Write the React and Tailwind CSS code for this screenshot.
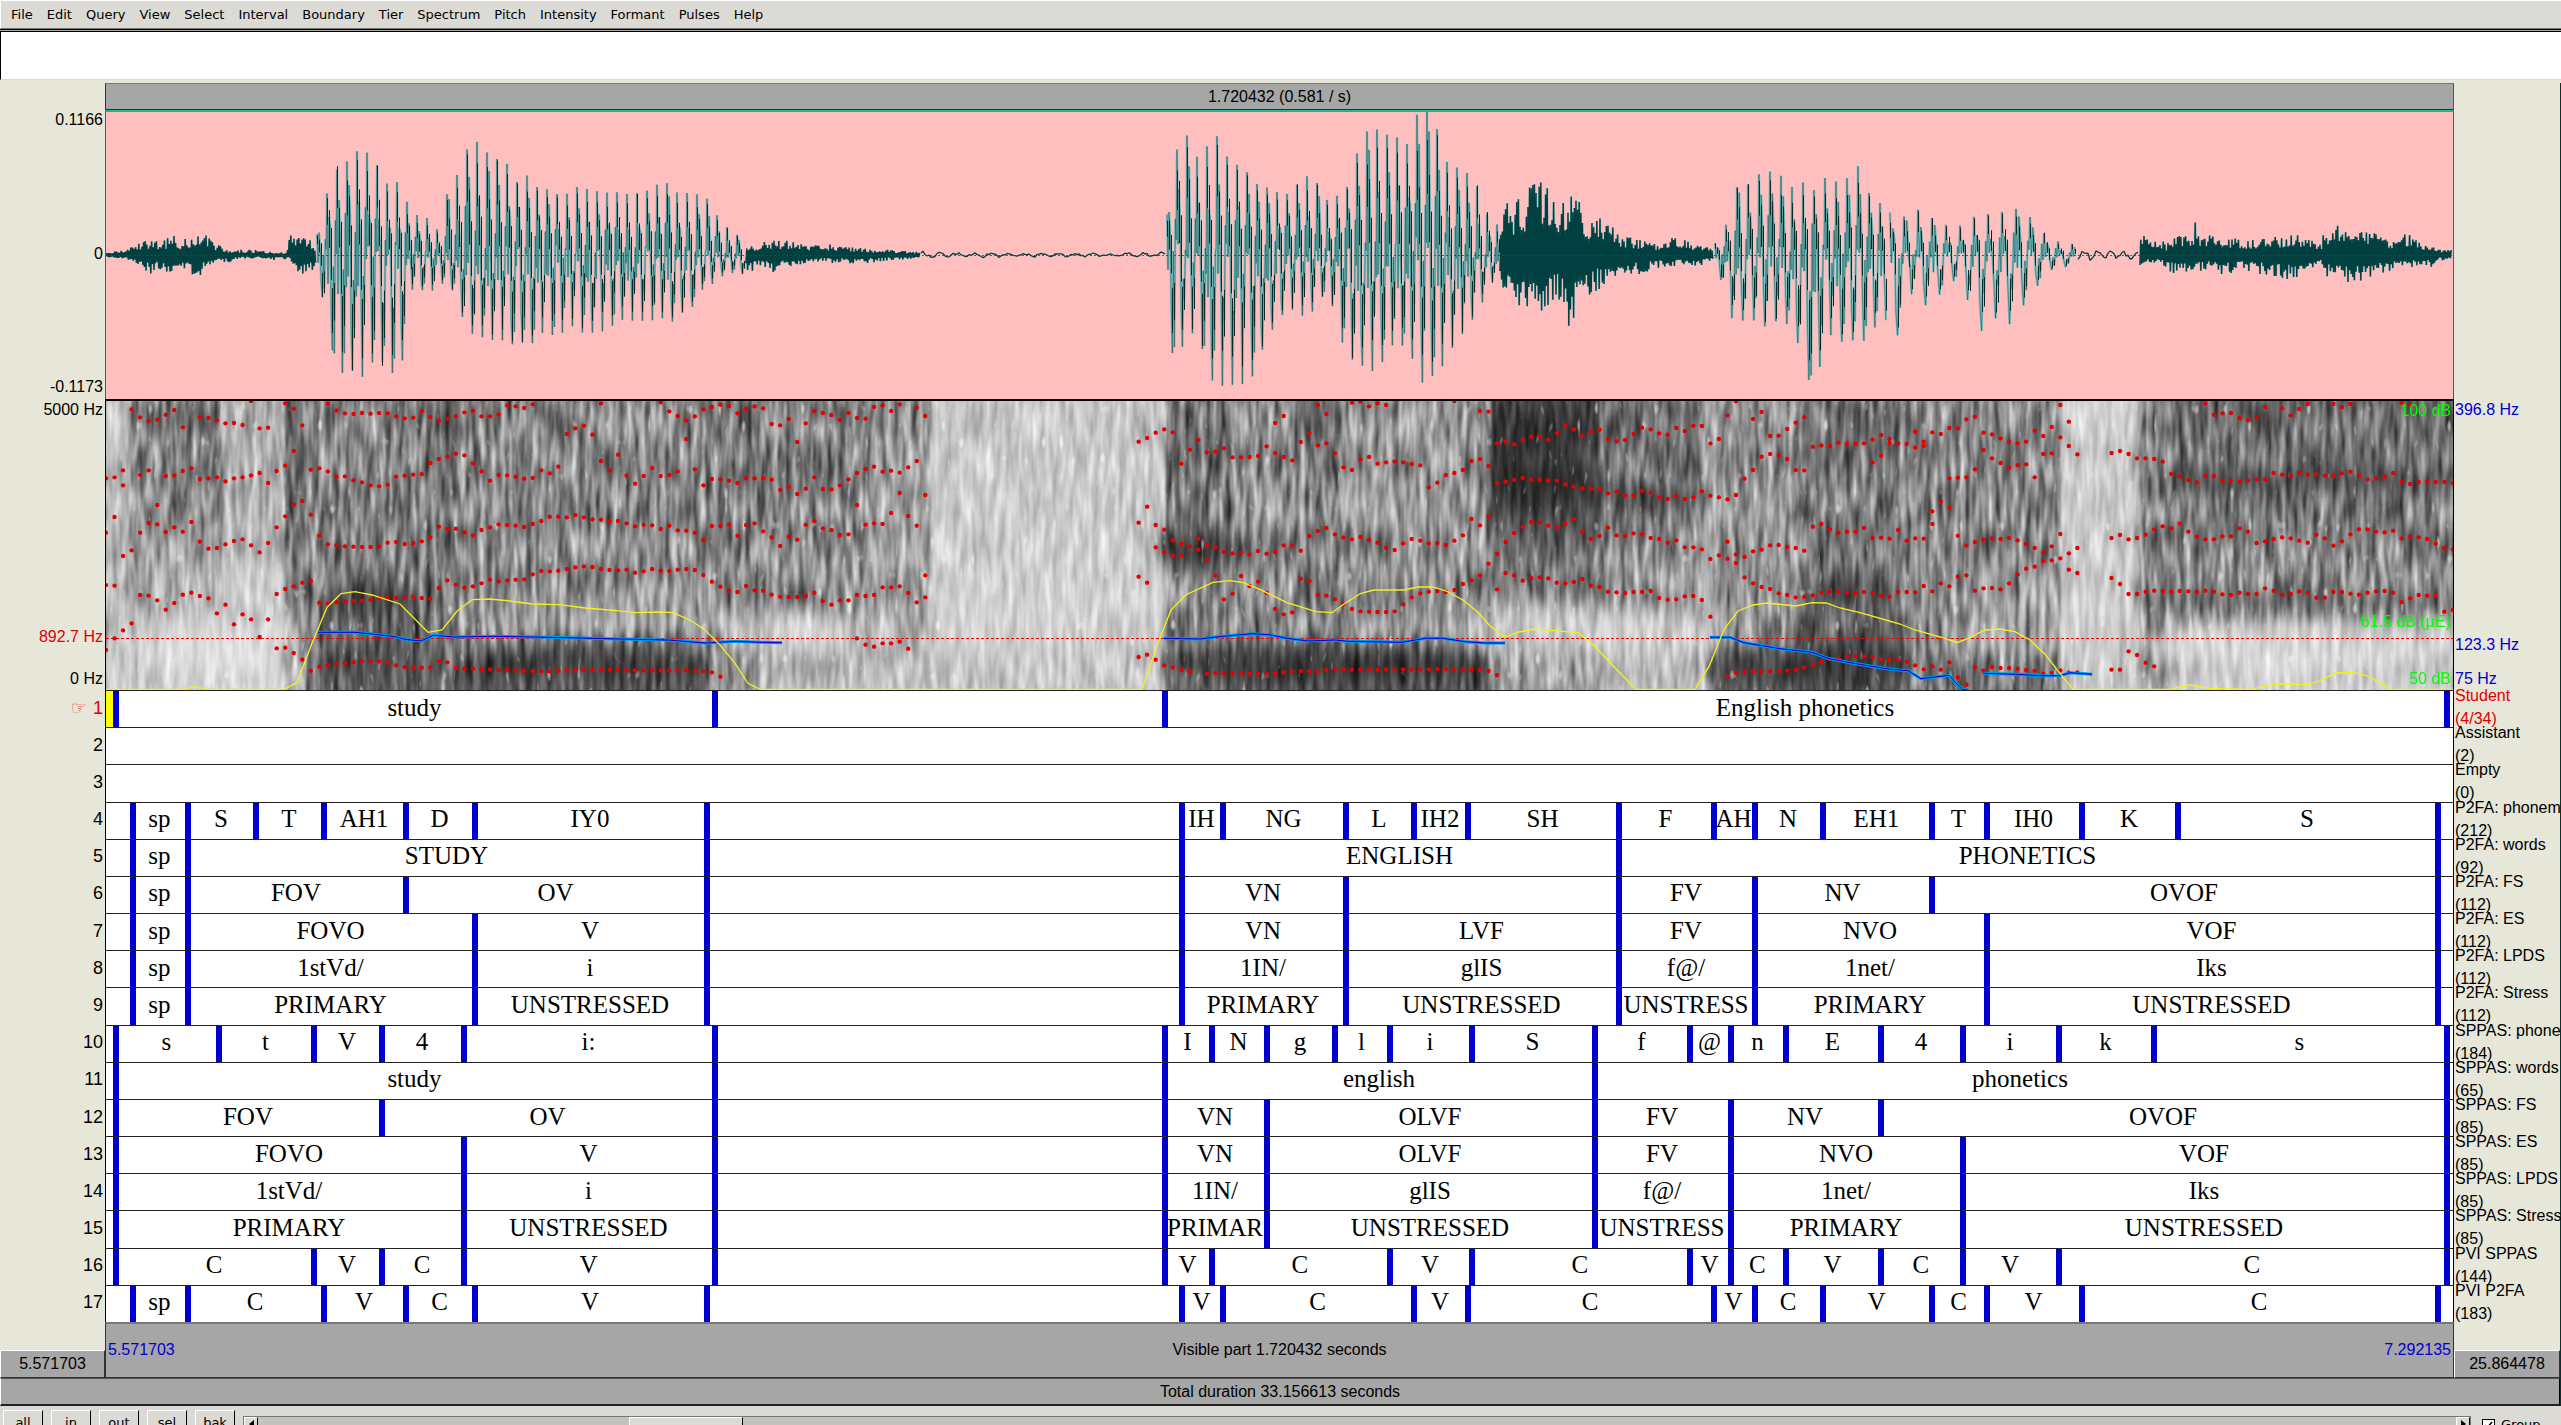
import React, { useMemo } from "react";

const MENUS = [
  "File", "Edit", "Query", "View", "Select", "Interval", "Boundary", "Tier",
  "Spectrum", "Pitch", "Intensity", "Formant", "Pulses", "Help",
];

// plot units: the visible part runs from LEFT to LEFT + SPAN
const LEFT = 106;
const SPAN = 2347;

// every entry is [end of interval, label]
const TIERS = [
  { name: "Student", count: "(4/34)", cells: [[116, ""], [715, "study"], [1165, ""], [2447, "English phonetics"]] },
  { name: "Assistant", count: "(2)", cells: [] },
  { name: "Empty", count: "(0)", cells: [] },
  {
    name: "P2FA: phonem", count: "(212)",
    cells: [
      [133, ""], [188, "sp"], [256, "S"], [324, "T"], [406, "AH1"], [475, "D"], [707, "IY0"], [1182, ""],
      [1223, "IH"], [1346, "NG"], [1414, "L"], [1468, "IH2"], [1619, "SH"], [1714, "F"], [1755, "AH"],
      [1823, "N"], [1932, "EH1"], [1987, "T"], [2082, "IH0"], [2178, "K"], [2438, "S"],
    ],
  },
  { name: "P2FA: words", count: "(92)", cells: [[133, ""], [188, "sp"], [707, "STUDY"], [1182, ""], [1619, "ENGLISH"], [2438, "PHONETICS"]] },
  {
    name: "P2FA: FS", count: "(112)",
    cells: [[133, ""], [188, "sp"], [406, "FOV"], [707, "OV"], [1182, ""], [1346, "VN"], [1619, ""], [1755, "FV"], [1932, "NV"], [2438, "OVOF"]],
  },
  {
    name: "P2FA: ES", count: "(112)",
    cells: [[133, ""], [188, "sp"], [475, "FOVO"], [707, "V"], [1182, ""], [1346, "VN"], [1619, "LVF"], [1755, "FV"], [1987, "NVO"], [2438, "VOF"]],
  },
  {
    name: "P2FA: LPDS", count: "(112)",
    cells: [[133, ""], [188, "sp"], [475, "1stVd/"], [707, "i"], [1182, ""], [1346, "1IN/"], [1619, "glIS"], [1755, "f@/"], [1987, "1net/"], [2438, "Iks"]],
  },
  {
    name: "P2FA: Stress", count: "(112)",
    cells: [
      [133, ""], [188, "sp"], [475, "PRIMARY"], [707, "UNSTRESSED"], [1182, ""], [1346, "PRIMARY"],
      [1619, "UNSTRESSED"], [1755, "UNSTRESS"], [1987, "PRIMARY"], [2438, "UNSTRESSED"],
    ],
  },
  {
    name: "SPPAS: phone", count: "(184)",
    cells: [
      [116, ""], [219, "s"], [314, "t"], [382, "V"], [464, "4"], [715, "i:"], [1165, ""], [1212, "I"], [1267, "N"],
      [1335, "g"], [1390, "l"], [1472, "i"], [1595, "S"], [1690, "f"], [1731, "@"], [1786, "n"], [1881, "E"],
      [1963, "4"], [2059, "i"], [2154, "k"], [2447, "s"],
    ],
  },
  { name: "SPPAS: words", count: "(65)", cells: [[116, ""], [715, "study"], [1165, ""], [1595, "english"], [2447, "phonetics"]] },
  {
    name: "SPPAS: FS", count: "(85)",
    cells: [[116, ""], [382, "FOV"], [715, "OV"], [1165, ""], [1267, "VN"], [1595, "OLVF"], [1731, "FV"], [1881, "NV"], [2447, "OVOF"]],
  },
  {
    name: "SPPAS: ES", count: "(85)",
    cells: [[116, ""], [464, "FOVO"], [715, "V"], [1165, ""], [1267, "VN"], [1595, "OLVF"], [1731, "FV"], [1963, "NVO"], [2447, "VOF"]],
  },
  {
    name: "SPPAS: LPDS", count: "(85)",
    cells: [[116, ""], [464, "1stVd/"], [715, "i"], [1165, ""], [1267, "1IN/"], [1595, "glIS"], [1731, "f@/"], [1963, "1net/"], [2447, "Iks"]],
  },
  {
    name: "SPPAS: Stress", count: "(85)",
    cells: [
      [116, ""], [464, "PRIMARY"], [715, "UNSTRESSED"], [1165, ""], [1267, "PRIMAR"], [1595, "UNSTRESSED"],
      [1731, "UNSTRESS"], [1963, "PRIMARY"], [2447, "UNSTRESSED"],
    ],
  },
  {
    name: "PVI SPPAS", count: "(144)",
    cells: [
      [116, ""], [314, "C"], [382, "V"], [464, "C"], [715, "V"], [1165, ""], [1212, "V"], [1390, "C"], [1472, "V"],
      [1690, "C"], [1731, "V"], [1786, "C"], [1881, "V"], [1963, "C"], [2059, "V"], [2447, "C"],
    ],
  },
  {
    name: "PVI P2FA", count: "(183)",
    cells: [
      [133, ""], [188, "sp"], [324, "C"], [406, "V"], [475, "C"], [707, "V"], [1182, ""], [1223, "V"], [1414, "C"],
      [1468, "V"], [1714, "C"], [1755, "V"], [1823, "C"], [1932, "V"], [1987, "C"], [2082, "V"], [2438, "C"],
    ],
  },
];

// amplitude envelope: x, height above zero, depth below zero
const ENVELOPE = [
  { kind: "noise", pts: [106, 2, 2, 125, 5, 4, 135, 12, 8, 150, 15, 18, 162, 12, 14, 174, 22, 20, 180, 14, 12, 195, 20, 24, 205, 20, 15, 215, 12, 10, 225, 6, 8, 240, 5, 4, 260, 5, 3, 275, 2, 5, 287, 3, 4, 289, 30, 5, 292, 14, 10, 300, 26, 22, 316, 9, 12] },
  { kind: "voiced", period: 10, pts: [317, 22, 25, 322, 38, 40, 327, 60, 98, 332, 98, 90, 337, 90, 128, 346, 98, 122, 352, 94, 120, 360, 110, 125, 368, 106, 115, 378, 93, 108, 388, 70, 118, 400, 75, 122, 405, 60, 90, 412, 38, 35, 424, 42, 35, 433, 33, 38, 440, 22, 30, 444, 58, 30, 456, 81, 40, 461, 100, 60, 466, 112, 80, 477, 114, 86, 487, 98, 80, 497, 96, 82, 507, 91, 88, 517, 75, 90, 528, 77, 88, 538, 70, 82, 548, 66, 80, 560, 62, 82, 575, 65, 72, 590, 64, 76, 605, 60, 74, 620, 61, 62, 635, 62, 67, 650, 65, 66, 662, 72, 62, 672, 70, 66, 683, 60, 60, 693, 61, 50, 705, 58, 30, 714, 45, 28, 725, 30, 20, 735, 22, 18, 745, 16, 20] },
  { kind: "noise", pts: [746, 12, 14, 752, 8, 18, 760, 12, 10, 770, 14, 17, 790, 15, 12, 805, 10, 8, 815, 12, 7, 860, 7, 9, 890, 5, 5, 920, 3, 4] },
  { kind: "hum", period: 17, pts: [921, 4, 4, 940, 3, 3, 1000, 3, 3, 1100, 2, 2, 1165, 4, 2] },
  { kind: "voiced", period: 10, pts: [1167, 40, 30, 1173, 90, 104, 1179, 116, 90, 1184, 118, 95, 1190, 125, 80, 1199, 95, 78, 1205, 100, 112, 1211, 113, 120, 1221, 115, 125, 1231, 88, 130, 1237, 90, 130, 1246, 82, 128, 1256, 75, 114, 1265, 66, 92, 1275, 62, 65, 1288, 64, 55, 1298, 73, 60, 1308, 80, 65, 1319, 72, 45, 1330, 48, 38, 1338, 60, 80, 1348, 70, 95, 1354, 97, 110, 1364, 116, 112, 1375, 122, 110, 1386, 126, 102, 1396, 121, 90, 1407, 116, 95, 1417, 134, 120, 1428, 144, 124, 1438, 123, 115, 1448, 96, 105, 1458, 91, 90, 1470, 84, 70, 1480, 68, 60, 1485, 45, 40, 1491, 42, 28, 1499, 25, 30] },
  { kind: "noise", pts: [1500, 20, 20, 1506, 52, 50, 1512, 40, 50, 1518, 62, 48, 1525, 50, 50, 1532, 78, 70, 1545, 65, 62, 1552, 66, 45, 1560, 45, 45, 1570, 70, 73, 1580, 50, 50, 1590, 38, 38, 1605, 33, 30, 1620, 20, 22, 1640, 15, 18, 1660, 10, 12, 1675, 18, 12, 1700, 9, 10, 1713, 7, 7] },
  { kind: "voiced", period: 11, pts: [1715, 12, 8, 1724, 22, 35, 1729, 42, 55, 1734, 60, 68, 1740, 76, 66, 1750, 71, 65, 1761, 80, 70, 1772, 88, 68, 1783, 76, 70, 1794, 65, 65, 1800, 70, 98, 1804, 75, 100, 1812, 70, 144, 1818, 64, 118, 1824, 78, 115, 1830, 72, 80, 1837, 70, 82, 1850, 75, 85, 1855, 95, 80, 1864, 65, 82, 1872, 62, 75, 1887, 48, 68] },
  { kind: "voiced", period: 14, pts: [1890, 42, 75, 1899, 38, 80, 1914, 46, 34, 1926, 42, 50, 1940, 32, 40, 1956, 28, 24, 1966, 30, 40, 1980, 42, 75, 1985, 44, 70, 1995, 42, 67, 2009, 44, 70, 2018, 46, 55, 2025, 40, 48, 2033, 36, 38, 2045, 22, 18, 2060, 12, 13, 2075, 11, 10] },
  { kind: "hum", period: 13, pts: [2078, 8, 7, 2100, 6, 5, 2138, 5, 6] },
  { kind: "noise", pts: [2140, 25, 10, 2145, 26, 12, 2152, 10, 8, 2160, 18, 8, 2165, 10, 15, 2180, 20, 20, 2193, 20, 19, 2195, 36, 20, 2197, 20, 18, 2210, 20, 14, 2220, 22, 20, 2240, 14, 15, 2260, 16, 18, 2280, 18, 22, 2296, 22, 24, 2310, 16, 16, 2322, 14, 12, 2325, 30, 34, 2328, 24, 22, 2340, 30, 25, 2358, 22, 28, 2368, 26, 22, 2385, 18, 18, 2400, 12, 12, 2402, 22, 12, 2415, 18, 12, 2430, 10, 12, 2440, 6, 6, 2452, 5, 4] },
];

// one glottal period: phase, share of the envelope
const PULSE = [
  [0, 1], [0.1, -0.15], [0.2, 0.62], [0.32, 0.2], [0.42, -0.5], [0.54, -1],
  [0.64, -0.2], [0.73, -0.66], [0.84, 0.25], [0.92, -0.1],
];

// formant frames: first frame, then one depth per frame (0 = no value)
const FORMANTS = [
  [3, [58, 82, 93, 89, 74, 60, 112, 0, 82, 84, 91, 100, 99, 105, 33, 115, 113, 0, 40, 56, 106, 0, 0, 41, 61, 70, 72, 69, 71, 69, 70, 79, 85, 83, 63, 81, 92, 86, 79, 67, 62, 79, 79, 73, 46, 49, 54, 43]],
  [54, [132, 115, 107, 134, 40]],
  [65, [37, 64, 78, 91, 79, 58, 51, 44, 48, 70, 57, 49, 55, 102, 106, 87, 156, 100, 63, 69, 75, 90, 69, 84, 86, 51, 46, 63, 43, 0, 53, 78]],
  [68, [147]],
  [0, [265, 262, 241, 0, 255, 241, 0, 258, 256, 243, 235, 267, 265, 262, 274, 265, 262, 256, 249, 279, 243, 227, 183, 0, 239, 235, 244, 260, 259, 271, 277, 286, 289, 284, 260, 257, 254, 252, 219, 207, 200, 191, 196, 220, 244, 272, 255, 256, 260, 266, 264, 241, 250, 230]],
  [2, [286]],
  [58, [213, 241, 194, 257, 281, 258, 234, 258, 255, 244, 0, 238, 286, 267, 268, 272, 279, 265, 265, 264, 269, 300, 290, 312, 296, 262, 297, 298, 286, 268, 249, 237, 230, 245, 242, 248, 232, 213, 315]],
  [0, [428, 381, 498, 481, 428, 399, 403, 426, 412, 425, 396, 455, 476, 474, 463, 453, 448, 466, 487, 459, 412, 379, 344, 333, 374, 437, 463, 466, 469, 470, 471, 471, 469, 458, 456, 462, 459, 454, 442, 410, 417, 416, 427, 436, 420, 412, 403, 405, 407, 411, 402, 393, 380, 380, 382, 375, 382, 388, 389, 395, 393, 400, 409, 404, 406, 417, 407, 421, 422, 428, 450, 408, 408, 404, 437, 405, 400, 424, 442, 468, 440, 449, 404, 393, 415, 420, 435, 433, 345, 404, 400, 402, 369, 309, 378, 407, 556]],
  [6, [345]],
  [0, [585, 587, 0, 0, 615, 617, 631, 659, 639, 614, 608, 618, 625, 670, 644, 703, 673, 688, 741, 688, 612, 597, 589, 578, 573, 638, 641, 636, 635, 632, 632, 629, 624, 624, 624, 622, 620, 624, 626, 594, 571, 584, 593, 589, 580, 569, 574, 571, 569, 568, 553, 543, 544, 542, 537, 532, 529, 531, 537, 540, 541, 539, 548, 544, 537, 542, 543, 539, 537, 540, 555, 575, 590, 602, 606, 588, 601, 602, 614, 620, 621, 621, 618, 608, 633, 644, 631, 631, 615, 618, 615, 592, 592, 589, 609, 637, 622]],
  [0, [780, 745, 721, 700]],
  [20, [775, 773, 789, 809, 842, 830, 826, 821, 819, 817, 814, 814, 814, 818, 826, 831, 833, 833, 832, 814, 817, 834, 836, 836, 838, 838, 840, 840, 841, 843, 843, 843, 844, 842, 841, 841, 840, 840, 840, 840, 840, 841, 841, 841, 841, 841, 841, 841, 841, 842, 843, 847, 860]],
  [88, [745, 764, 770, 760, 760, 755, 776]],
  [121, [155, 144, 128, 118, 127, 221, 179, 150, 187, 185, 175, 202, 202, 201, 198, 169, 189, 201, 211, 156, 130, 166, 160, 190, 232, 240, 208, 201, 221, 217, 214, 217, 222, 226, 292, 278, 255, 249, 240, 213, 207, 228, 279, 275, 269, 264, 269, 269, 272, 272, 283, 290, 295, 295, 297, 310, 305, 316, 317, 302, 308, 322, 327, 318, 327, 322, 304, 317, 322, 328, 315, 266, 240, 200, 192, 195, 207, 240, 241]],
  [137, [99, 78, 0, 0, 0, 45, 72, 0, 0, 38, 35, 49, 40, 45, 0, 0, 0, 0, 0, 0, 0, 33, 0, 0, 63, 65, 160, 154, 163, 149, 140, 140, 149, 130, 107, 119, 138, 126, 119, 148, 154, 150, 132, 113, 118, 130, 134, 114, 123, 107, 108, 160, 147, 76, 34, 0, 87, 66, 138, 137, 117, 98, 82]],
  [121, [398, 350, 405, 419, 451, 462, 469, 446, 464, 473, 486, 490, 487, 493, 483, 491, 486, 466, 466, 482, 438, 423, 414, 433, 443, 448, 441, 450, 458, 474, 480, 460, 447, 452, 460, 459, 465, 452, 436, 387, 406, 380, 491, 456, 429, 410, 396, 397, 407, 411, 402, 387, 425, 447, 438, 413, 436, 438, 430, 433, 444, 447, 458, 451, 472, 472, 478, 507, 496, 506, 493, 501, 484, 479, 466, 465, 471, 474, 482]],
  [123, [472, 487, 498, 496, 0, 479, 510]],
  [190, [455, 519]],
  [121, [560, 578]],
  [130, [557, 628, 611, 558, 588, 575, 608, 657, 673, 667, 566, 573, 614, 617, 628, 642, 657, 664, 665, 666, 666, 664, 643, 622, 610, 605, 603, 606, 600, 582, 571, 556, 521, 598, 549, 556, 572, 564, 562, 565, 578, 580, 576, 567, 587, 591, 605, 607, 609, 606, 606, 603, 624, 629, 628, 619, 618, 630, 680]],
  [192, [562, 580, 591, 597, 610, 615, 622, 620]],
  [121, [801, 794, 809, 826, 832, 840, 844, 0, 851, 849, 850, 850, 850, 851, 851, 851, 851, 847, 844, 843, 844, 844, 840, 838, 838, 839, 839, 838, 839, 839, 839, 838, 839, 838, 838, 837, 838, 838, 840, 840, 840, 843, 855]],
  [190, [859, 848, 846, 845, 845, 843, 843, 842, 840, 833]],
  [200, [170, 166, 168, 158, 162, 162, 160, 149, 135, 147, 160, 162, 125, 155, 0, 0, 114, 115, 88, 80, 128, 133, 145, 155, 160, 155, 122, 138, 111, 142, 168, 193, 0, 0, 0, 189, 183, 192, 205, 205, 207, 215, 252, 259, 270, 277, 258, 258, 272, 272, 276, 271, 268, 268, 249, 254, 258, 248, 254, 252, 257, 258, 250, 245, 257, 268, 265, 260, 249, 275, 282, 276, 276, 276, 276, 280]],
  [207, [217, 197, 159, 0, 0, 172, 168, 127, 132, 265, 263, 262, 238, 180, 205, 219, 233, 225, 223, 262, 192, 190, 45, 95]],
  [214, [364, 335, 353]],
  [246, [40, 74, 70, 69, 84, 90, 83, 51, 0, 55, 76, 57, 42, 0, 0, 42, 51, 42]],
  [269, [38, 48]],
  [200, [410, 402, 418, 428, 425, 425, 414, 444, 443, 446, 420, 452, 445, 446, 402, 0, 0, 437, 466, 456, 449, 445, 447, 444, 451, 462, 474, 487, 469, 432, 490, 474, 0, 0, 0, 444, 435, 448, 444, 434, 418, 409, 415, 401, 425, 440, 448, 448, 439, 439, 415, 425, 459, 454, 447, 442, 445, 452, 458, 434, 445, 467, 454, 433, 418, 418, 425, 427, 422, 445, 440, 442, 447, 461, 474, 478]],
  [200, [616, 608, 605, 606, 608, 610, 606, 610, 618, 620, 606, 606, 607, 588, 604, 580, 589, 560, 556, 602, 595, 594, 598, 580, 553, 536, 530, 513, 511, 505, 539, 549, 0, 0, 0, 564, 582, 612, 612, 605, 602, 603, 605, 603, 604, 605, 602, 605, 613, 615, 608, 612, 612, 595, 602, 614, 611, 604, 608, 623, 623, 606, 606, 611, 614, 608, 604, 603, 608, 636, 625, 615, 617, 617, 665, 660]],
  [200, [825, 815, 808, 805, 799, 799, 799, 801, 808, 809, 810, 815, 826, 838, 829, 839, 817, 862, 884, 832, 842, 831, 834, 834, 836, 840, 842, 852, 849, 841, 848, 847]],
  [235, [839, 839, 784, 795, 818, 829]],
];

const INTENSITY = [
  106, 898, 183, 898, 195, 890, 207, 898, 284, 898, 297, 878, 312, 760, 327, 652, 341, 611, 355, 605, 372, 615, 400, 642, 428, 727,
  442, 720, 457, 664, 472, 629, 490, 627, 510, 633, 532, 642, 560, 644, 585, 654, 610, 660, 635, 668, 660, 666, 673, 668,
  690, 690, 705, 720, 720, 765, 735, 820, 748, 880, 760, 898, 1142, 898, 1158, 760, 1171, 660, 1186, 614, 1213, 577,
  1230, 572, 1243, 578, 1260, 598, 1287, 638, 1316, 665, 1332, 668, 1345, 640, 1361, 610, 1374, 600, 1404, 600, 1418, 591,
  1433, 591, 1446, 603, 1463, 630, 1478, 667, 1490, 708, 1505, 741, 1519, 726, 1535, 717, 1578, 728, 1593, 763, 1617, 840,
  1636, 898, 1695, 898, 1709, 830, 1724, 718, 1738, 663, 1753, 645, 1767, 639, 1796, 648, 1812, 638, 1826, 639, 1840, 654,
  1860, 668, 1900, 702, 1915, 720, 1945, 745, 1957, 758, 1968, 745, 1985, 720, 1999, 717, 2015, 725, 2030, 750, 2045, 793,
  2060, 850, 2073, 898, 2170, 898, 2190, 885, 2208, 895, 2250, 898, 2278, 882, 2308, 884, 2320, 872, 2336, 849, 2352, 847,
  2366, 856, 2392, 898, 2453, 898,
];

const PITCH = [
  [318, 727, 355, 727, 375, 733, 395, 740, 405, 748, 421, 753, 433, 736, 455, 741, 495, 739, 535, 741, 580, 744, 620, 747, 668, 750, 705, 759, 735, 754, 760, 757, 782, 758],
  [1164, 745, 1200, 747, 1216, 741, 1252, 731, 1269, 734, 1287, 745, 1308, 753, 1335, 750, 1348, 754, 1402, 757, 1425, 745, 1443, 745, 1465, 755, 1485, 759, 1505, 759],
  [1710, 742, 1730, 742, 1744, 758, 1780, 776, 1812, 787, 1828, 805, 1850, 818, 1890, 838, 1908, 842, 1921, 866, 1949, 856, 1962, 898, 1968, 900],
  [1983, 850, 2017, 853, 2040, 857, 2060, 857, 2070, 848, 2092, 853],
];

// energy columns: start, end, gray at the top, at 35%, at 70% and at the bottom
const COLUMNS = [
  [106, 128, 190, 185, 185, 205], [128, 160, 128, 128, 165, 200], [160, 222, 108, 120, 180, 204],
  [222, 284, 165, 172, 205, 212], [284, 305, 88, 92, 128, 160], [305, 325, 112, 120, 136, 96],
  [325, 440, 120, 128, 100, 76], [440, 455, 76, 88, 128, 110], [455, 600, 124, 134, 136, 66],
  [600, 705, 132, 134, 148, 60], [705, 760, 118, 118, 150, 150], [760, 870, 112, 114, 146, 185],
  [870, 930, 132, 150, 158, 190], [930, 1165, 190, 194, 204, 186], [1166, 1230, 108, 104, 120, 80],
  [1230, 1300, 134, 142, 128, 62], [1300, 1340, 96, 128, 116, 56], [1340, 1490, 144, 156, 138, 56],
  [1490, 1600, 44, 50, 144, 136], [1600, 1700, 92, 100, 156, 176], [1700, 1712, 150, 156, 184, 184],
  [1712, 1802, 148, 142, 150, 70], [1802, 1900, 100, 118, 104, 60], [1900, 1980, 128, 132, 138, 104],
  [1980, 2060, 132, 126, 166, 96], [2060, 2139, 205, 198, 206, 190], [2139, 2170, 120, 112, 116, 160],
  [2170, 2453, 82, 102, 134, 212],
];

// smudges over the columns: x, y, rx, ry, gray, opacity
const SMUDGES = [
  [360, 200, 55, 16, 20, 0.5], [590, 262, 120, 18, 20, 0.6], [600, 222, 130, 10, 235, 0.5], [370, 262, 55, 20, 30, 0.4],
  [1195, 148, 40, 20, 10, 0.6], [1320, 262, 160, 17, 10, 0.6], [1530, 70, 50, 40, 0, 0.5], [1590, 100, 90, 20, 10, 0.3],
  [1330, 225, 150, 10, 220, 0.3], [1540, 230, 90, 26, 225, 0.5], [1760, 265, 60, 18, 10, 0.5], [1850, 262, 60, 24, 10, 0.5],
  [1850, 190, 60, 18, 10, 0.4], [2000, 240, 70, 14, 220, 0.4], [2290, 80, 160, 12, 20, 0.4], [2300, 202, 160, 10, 20, 0.4],
  [2300, 245, 160, 26, 235, 0.6], [1650, 240, 60, 30, 230, 0.4], [210, 240, 90, 30, 240, 0.5], [820, 235, 90, 20, 220, 0.5],
];

// glottal striping: start, end
const STRIPES = [[325, 760], [1166, 1490], [1720, 2060]];

const plotX = (x) => x - LEFT;
const plotY = (v) => (v - 33) / 3;

function toPoints(list) {
  const out = [];
  for (let i = 0; i < list.length; i += 2) {
    out.push(`${plotX(list[i])},${plotY(list[i + 1]).toFixed(1)}`);
  }
  return out.join(" ");
}

function makeRandom(seed) {
  let s = seed;
  return () => {
    s = (s * 16807) % 2147483647;
    return s / 2147483647;
  };
}

function envelopeAt(pts, x) {
  for (let i = 3; i < pts.length; i += 3) {
    if (x <= pts[i]) {
      const t = (x - pts[i - 3]) / (pts[i] - pts[i - 3]);
      return [
        pts[i - 2] + (pts[i + 1] - pts[i - 2]) * t,
        pts[i - 1] + (pts[i + 2] - pts[i - 1]) * t,
      ];
    }
  }
  return [pts[pts.length - 2], pts[pts.length - 1]];
}

function buildWave() {
  const rand = makeRandom(4711);
  const mid = 143;
  const out = { voiced: "", noise: "", hum: "", strands: "" };
  ENVELOPE.forEach(({ kind, period, pts }) => {
    const start = pts[0];
    const end = pts[pts.length - 3];
    const d = [];
    const at = (x, share) => {
      const [up, down] = envelopeAt(pts, Math.max(start, Math.min(end, x)));
      return mid - (share > 0 ? share * up : share * down);
    };
    const put = (x, share) => d.push(`${plotX(x).toFixed(1)} ${at(x, share).toFixed(1)}`);
    if (kind === "noise") {
      for (let x = start, i = 0; x <= end; x += 0.8, i++) {
        const r = 0.4 + 0.65 * Math.pow(rand(), 1.3);
        put(x, i % 2 ? r : -r);
      }
    } else if (kind === "hum") {
      for (let x = start; x <= end; x += 2) {
        put(x, Math.sin((x / period) * 6.28) * 0.6 + (rand() - 0.5) * 0.8);
      }
    } else {
      for (let x = start; x < end; x += period) {
        const size = 0.94 + rand() * 0.11;
        PULSE.forEach(([phase, share], i) => {
          const jitter = i === 0 || i === 5 ? 0 : (rand() - 0.5) * 0.5;
          const px = x + phase * period;
          if (px <= end) put(px, share * size + jitter);
        });
        // dark strokes on the flanks, where samples pile up
        [[0, 0.94, 0.5], [0.2, 0.62, 0.1], [0.54, -0.4, -0.94], [0.73, -0.3, -0.7], [0.35, 0.35, -0.3]].forEach(([phase, a, b]) => {
          const px = x + phase * period;
          const k = 0.8 + rand() * 0.25;
          if (px <= end) {
            out.strands += `M${Math.round(plotX(px)) + 0.5} ${at(px, a * k).toFixed(1)}V${at(px, b * k).toFixed(1)}`;
          }
        });
      }
    }
    out[kind] += "M" + d.join("L");
  });
  return out;
}

function Waveform() {
  const wave = useMemo(buildWave, []);
  return (
    <svg className="block h-[287px] w-full bg-[#ffbfbf]" viewBox="0 0 2347 287" preserveAspectRatio="none" aria-label="Waveform">
      <g fill="none" strokeLinejoin="bevel">
        <path d={wave.voiced} stroke="#80c0c0" strokeWidth="2.4" />
        <path d={wave.noise} stroke="#80c0c0" strokeWidth="2" />
        <path d={wave.noise} stroke="#004040" strokeWidth="1.4" />
        <path d={wave.voiced} stroke="#003c3c" strokeWidth="0.4" />
        <path d={wave.strands} stroke="#082c2c" strokeWidth="1" />
        <path d={wave.hum} stroke="#004040" strokeWidth="1.3" />
        <path d="M0 143.5H2347" stroke="#5a2a5a" strokeWidth="1" strokeDasharray="2 2" opacity="0.8" />
      </g>
    </svg>
  );
}

function gray(v) {
  return `rgb(${v},${v},${v})`;
}

function Spectrogram() {
  const dots = useMemo(() => {
    const list = [];
    FORMANTS.forEach(([first, values]) => {
      values.forEach((v, i) => {
        if (v) list.push([(first + i) * 8.534, plotY(v)]);
      });
    });
    return list;
  }, []);

  return (
    <svg className="block h-[289px] w-full bg-[#999]" viewBox="0 0 2347 289" preserveAspectRatio="none" aria-label="Spectrogram">
      <defs>
        <filter id="soft" x="-5%" y="-5%" width="110%" height="110%" colorInterpolationFilters="sRGB">
          <feGaussianBlur stdDeviation="2 3" />
        </filter>
        <filter id="fade" x="-5%" y="-5%" width="110%" height="110%" colorInterpolationFilters="sRGB">
          <feGaussianBlur stdDeviation="1 0" />
        </filter>
        <filter id="smudge" x="-20%" y="-20%" width="140%" height="140%" colorInterpolationFilters="sRGB">
          <feGaussianBlur stdDeviation="10 8" />
        </filter>
        <filter id="grain" x="0" y="0" width="100%" height="100%" colorInterpolationFilters="sRGB">
          <feTurbulence type="fractalNoise" baseFrequency="0.15 0.024" numOctaves="2" seed="8" />
          <feColorMatrix values="0.95 0 0 0 0.05  0.95 0 0 0 0.05  0.95 0 0 0 0.05  0 0 0 0 1" />
        </filter>
        <filter id="speckle" x="0" y="0" width="100%" height="100%" colorInterpolationFilters="sRGB">
          <feTurbulence type="fractalNoise" baseFrequency="0.17 0.06" numOctaves="1" seed="23" />
          <feColorMatrix values="0 0 0 0 1  0 0 0 0 1  0 0 0 0 1  0 7 0 0 -4.8" />
        </filter>
        <pattern id="pulses" width="10" height="289" patternUnits="userSpaceOnUse">
          <rect width="4" height="289" fill="#000" opacity="0.2" />
        </pattern>
        {COLUMNS.map(([x, , a, b, c, d]) => (
          <linearGradient key={x} id={`col${x}`} x1="0" y1="0" x2="0" y2="1">
            <stop offset="0" stopColor={gray(a)} />
            <stop offset="0.35" stopColor={gray(b)} />
            <stop offset="0.7" stopColor={gray(c)} />
            <stop offset="1" stopColor={gray(d)} />
          </linearGradient>
        ))}
      </defs>
      <g filter="url(#soft)">
        {COLUMNS.map(([x, end]) => (
          <rect key={x} x={plotX(x)} y="-10" width={end - x + 1} height="309" fill={`url(#col${x})`} />
        ))}
      </g>
      <g filter="url(#smudge)">
        {SMUDGES.map(([x, y, rx, ry, g, o], i) => (
          <ellipse key={i} cx={plotX(x)} cy={y} rx={rx} ry={ry} fill={gray(g)} opacity={o} />
        ))}
        {dots.map(([x, y], i) => (
          <ellipse key={i} cx={x} cy={y} rx="12" ry="9" opacity="0.09" />
        ))}
      </g>
      <g filter="url(#fade)">
        {STRIPES.map(([a, b]) => (
          <rect key={a} x={plotX(a)} width={b - a} height="289" fill="url(#pulses)" />
        ))}
      </g>
      <rect width="2347" height="289" fill="#fff" opacity="0.1" />
      <rect className="mix-blend-overlay" width="2347" height="289" filter="url(#grain)" />
      <rect width="2347" height="289" filter="url(#speckle)" opacity="0.6" />
      <path d="M0 237.5H2347" stroke="#f00000" strokeWidth="1" strokeDasharray="3 2" />
      <g fill="#e60000">
        {dots.map(([x, y], i) => (
          <circle key={i} cx={x} cy={y} r="2.2" />
        ))}
      </g>
      <g fill="none">
        {PITCH.map((p, i) => (
          <polyline key={i} points={toPoints(p)} stroke="#0096f0" strokeWidth="3" />
        ))}
        {PITCH.map((p, i) => (
          <polyline key={i} points={toPoints(p)} stroke="#0000e0" strokeWidth="1" />
        ))}
        <polyline points={toPoints(INTENSITY)} stroke="#f4f020" strokeWidth="1.3" />
      </g>
    </svg>
  );
}

function Tier({ cells, selected }) {
  let from = LEFT - 3;
  return (
    <div className="flex min-h-0 border-t border-[#222]">
      {cells.map(([end, label], i) => {
        const start = i === 0 ? LEFT : from + 3;
        const width = end + 3 - start;
        from = end;
        return (
          <div
            key={end}
            className={`flex shrink-0 items-center justify-center border-r-6 border-[#0000d2] pr-[2px] pb-[3px] whitespace-nowrap ${
              selected && i === 0 ? "bg-[#ffff00]" : ""
            }`}
            style={{ width: `${(width / SPAN) * 100}%` }}
          >
            {label}
          </div>
        );
      })}
    </div>
  );
}

const RAISED = "border border-t-white border-l-white border-r-[#333] border-b-[#333] bg-[#a6a6a6]";

export default function App() {
  return (
    <div className="flex h-screen flex-col overflow-hidden bg-[#e6e6d9] font-['Liberation_Sans',Arial,sans-serif] text-[16px] leading-5 text-black">
      <nav className="flex h-[29px] shrink-0 items-center gap-[14px] border-t border-l border-white border-b border-b-[#777] bg-[#dcdad5] pl-[10px] font-['DejaVu_Sans',sans-serif] text-[13px]">
        {MENUS.map((m) => (
          <button key={m} type="button">{m}</button>
        ))}
      </nav>
      <div className="shrink-0 border-t border-black bg-[#b0aea8] pt-px">
        <textarea
          aria-label="Interval text"
          className="block h-[49px] w-full resize-none border-t border-l border-black border-b border-b-[#dcdad5] bg-white px-2 font-['Liberation_Serif',serif] text-[25px] outline-none"
        />
      </div>

      <main className="mt-[3px] grid shrink-0 grid-cols-[105px_minmax(0,1fr)_106px] border-r border-[#0a3030]">
        <div />
        <button type="button" className="h-[27px] border border-t-[#777] border-r-[#555] border-b-[#0a3a3a] border-l-[#333] bg-[#a6a6a6]">
          1.720432 (0.581 / s)
        </button>
        <div />

        <div className="flex flex-col items-end justify-between pr-[2px] pb-[2px]">
          <span>0.1166</span>
          <span>0</span>
          <span>-0.1173</span>
        </div>
        <div className="border-x border-t-2 border-x-[#246a80] border-t-[#1cb890]">
          <Waveform />
        </div>
        <div />

        <div className="flex flex-col items-end pt-px pr-[2px]">
          <span>5000 Hz</span>
          <span className="mt-[207px] text-[#e00000]">892.7 Hz</span>
          <span className="mt-[22px]">0 Hz</span>
        </div>
        <div className="relative border-x border-t-2 border-black">
          <Spectrogram />
          <div className="absolute top-0 right-[2px] flex flex-col items-end text-[#00ff00]">
            <span>100 dB</span>
            <span className="mt-[191px]">61.5 dB (µE)</span>
            <span className="mt-[37px]">50 dB</span>
          </div>
        </div>
        <div className="flex flex-col pt-px pl-px text-[#0000d2]">
          <span>396.8 Hz</span>
          <span className="mt-[215px]">123.3 Hz</span>
          <span className="mt-[14px]">75 Hz</span>
        </div>

        <div className="grid h-[632px] grid-rows-[repeat(17,minmax(0,1fr))] pr-[2px] text-[18px]">
          {TIERS.map((t, i) => (
            <div key={t.name} className={`flex items-center justify-end gap-[6px] pb-[2px] ${i === 0 ? "text-[#e00000]" : ""}`}>
              {i === 0 && <span className="font-['DejaVu_Sans',sans-serif] text-[18px] opacity-70">☞</span>}
              {i + 1}
            </div>
          ))}
        </div>
        <div className="grid h-[632px] grid-rows-[repeat(17,minmax(0,1fr))] border-x border-black bg-white font-['Liberation_Serif',serif] text-[25px] leading-7">
          {TIERS.map((t, i) => (
            <Tier key={t.name} cells={t.cells} selected={i === 0} />
          ))}
        </div>
        <div className="grid h-[632px] grid-rows-[repeat(17,minmax(0,1fr))] pl-px leading-[23px] whitespace-nowrap">
          {TIERS.map((t, i) => (
            <div key={t.name} className={`-mt-[6px] ${i === 0 ? "text-[#e00000]" : ""}`}>
              <div>{t.name}</div>
              <div>{t.count}</div>
            </div>
          ))}
        </div>

        <div className="flex h-[56px] items-end">
          <button type="button" className={`h-[28px] w-full ${RAISED}`}>5.571703</button>
        </div>
        <button type="button" className="grid h-[56px] grid-cols-3 items-center border border-t-2 border-x-[#333] border-t-[#777] border-b-[#333] bg-[#a6a6a6] px-[2px] pb-[2px]">
          <span className="text-left text-[#0000d2]">5.571703</span>
          <span>Visible part 1.720432 seconds</span>
          <span className="text-right text-[#0000d2]">7.292135</span>
        </button>
        <div className="flex h-[56px] items-end">
          <button type="button" className={`h-[28px] w-full ${RAISED}`}>25.864478</button>
        </div>
        <button type="button" className="col-span-3 h-[28px] border border-t-[#555] border-l-white border-b-2 border-b-[#222] bg-[#a6a6a6]">
          Total duration 33.156613 seconds
        </button>
      </main>

      <footer className="flex grow items-start overflow-hidden bg-[#dcdad5] pt-[4px] pl-[3px] font-['DejaVu_Sans',sans-serif] text-[13px]">
        <div className="flex gap-2">
          {["all", "in", "out", "sel", "bak"].map((b) => (
            <button key={b} type="button" className="h-[26px] w-[40px] border border-t-white border-r-black border-b-black border-l-white bg-[#dcdad5]">
              {b}
            </button>
          ))}
        </div>
        <div className="mt-[6px] ml-[8px] flex h-[16px] grow border border-[#777] bg-[#c4c2bd]">
          <button type="button" aria-label="Scroll left" className="flex w-[14px] items-center justify-center border border-t-white border-r-black border-b-black border-l-white bg-[#dcdad5]">
            <svg className="h-[8px] w-[5px]" viewBox="0 0 5 8"><path d="M5 0L0 4L5 8Z" /></svg>
          </button>
          <div className="w-1/6" />
          <div className="w-[114px] border border-t-white border-r-black border-b-black border-l-white bg-[#dcdad5]" />
          <button type="button" aria-label="Scroll right" className="ml-auto flex w-[14px] items-center justify-center border border-t-white border-r-black border-b-black border-l-white bg-[#dcdad5]">
            <svg className="h-[8px] w-[5px]" viewBox="0 0 5 8"><path d="M0 0L5 4L0 8Z" /></svg>
          </button>
        </div>
        <label className="mt-[5px] ml-[11px] flex w-[79px] items-center gap-[6px]">
          <span className="relative flex h-[13px] w-[13px]">
            <input type="checkbox" defaultChecked className="peer h-[13px] w-[13px] appearance-none border border-black bg-white" />
            <svg className="pointer-events-none absolute inset-0 hidden peer-checked:block" viewBox="0 0 13 13">
              <path d="M3 6L5 9L10 3" fill="none" stroke="#000" strokeWidth="1.5" />
            </svg>
          </span>
          Group
        </label>
      </footer>
    </div>
  );
}
